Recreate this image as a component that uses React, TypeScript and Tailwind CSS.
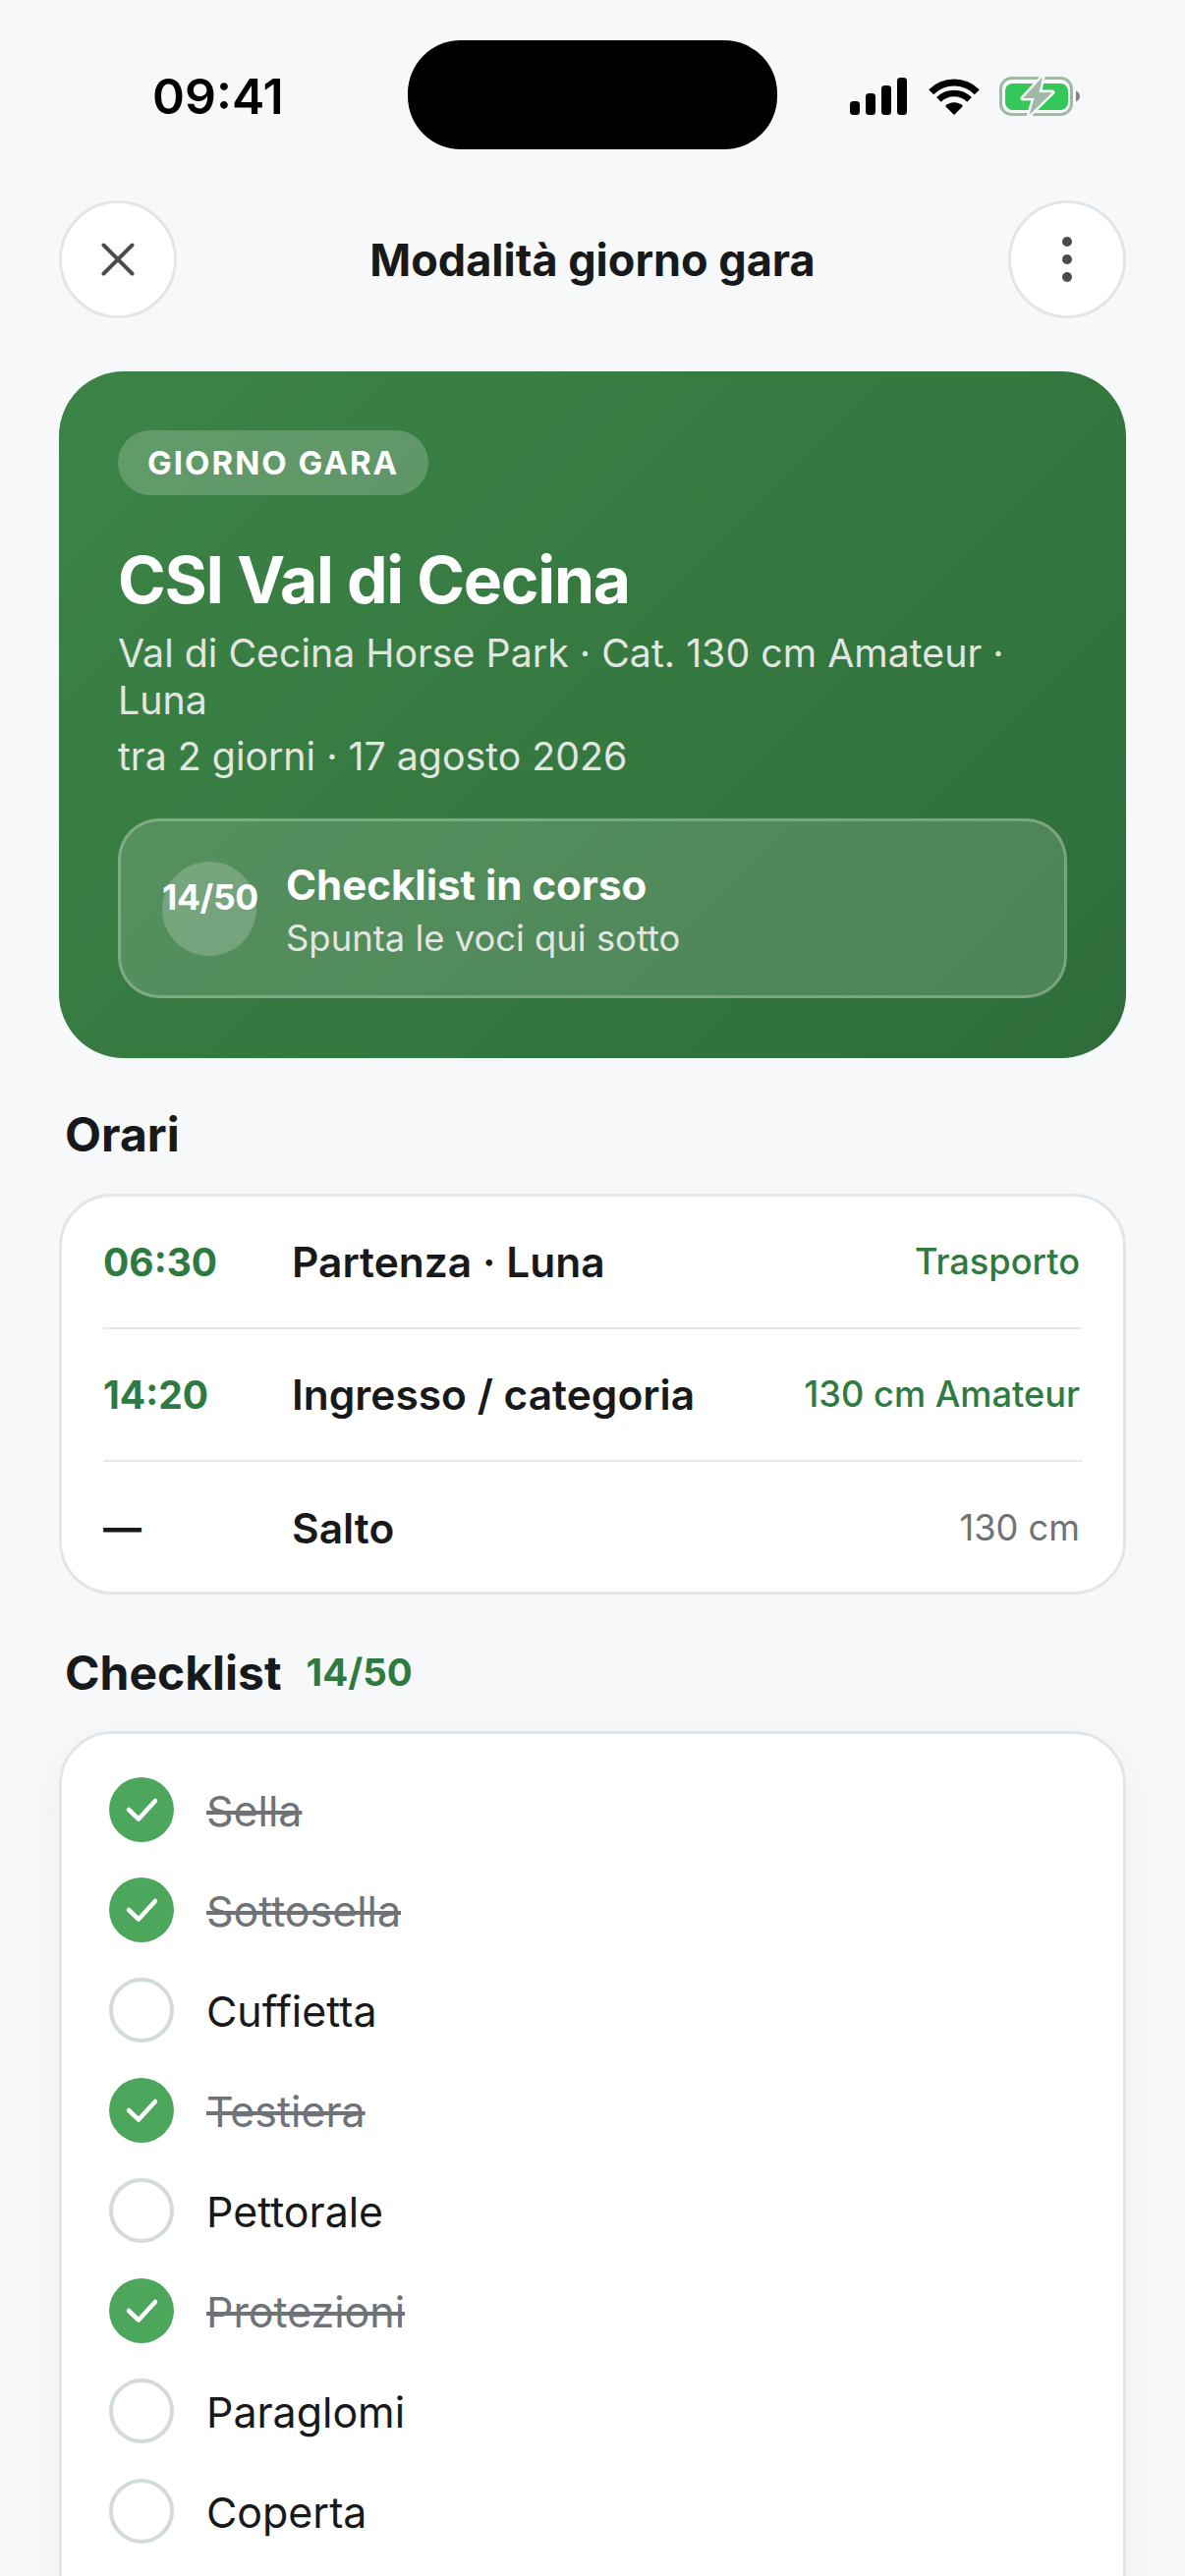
import React from "react";

const Signal = () => (
  <svg width="58" height="38" viewBox="0 0 58 38" fill="#000">
    <rect x="0" y="24" width="10" height="14" rx="3.5" />
    <rect x="16" y="16" width="10" height="22" rx="3.5" />
    <rect x="32" y="8" width="10" height="30" rx="3.5" />
    <rect x="48" y="0" width="10" height="38" rx="3.5" />
  </svg>
);

const Wifi = () => (
  <svg width="52" height="38" viewBox="0 0 52 38" fill="none" stroke="#000">
    <path d="M2.7 14.7A33 33 0 0 1 49.3 14.7" strokeWidth="7" />
    <path d="M10.4 22.4A22 22 0 0 1 41.6 22.4" strokeWidth="6.5" />
    <path d="M17 29L26 38L35 29A12.7 12.7 0 0 0 17 29Z" fill="#000" stroke="none" />
  </svg>
);

const Battery = () => (
  <svg width="82" height="40" viewBox="0 0 82 40" fill="none">
    <rect x="1.5" y="1.5" width="72" height="37" rx="11" stroke="#9fb9a3" strokeWidth="3" />
    <rect x="6" y="7" width="64" height="27" rx="7.5" fill="#34c759" />
    <path d="M78 14.5C80.5 15.5 82 17.5 82 20C82 22.5 80.5 24.5 78 25.5Z" fill="#7d8288" />
    <path d="M44 0.5L24 22H35.5L30.5 39L54 16H40.5Z" fill="#a0b9a4" stroke="#f6f8fa" strokeWidth="5" paintOrder="stroke" strokeLinejoin="round" />
  </svg>
);

const Check = ({ done, label }: { done: boolean; label: string }) => (
  <div className="flex items-center gap-[33px] h-[66px] mb-[36px]">
    {done ? (
      <div className="w-[66px] h-[66px] rounded-full bg-[#4ca65b] shrink-0">
        <svg width="66" height="66" viewBox="0 0 66 66" fill="none" stroke="#fff" strokeWidth="4.5" strokeLinecap="round" strokeLinejoin="round">
          <path d="M20 33L30 42.5L47 24" />
        </svg>
      </div>
    ) : (
      <div className="w-[66px] h-[66px] rounded-full border-[4.5px] border-[#d3dbd9] bg-white shrink-0" />
    )}
    <span className={done ? "pt-[2px] text-[42.9px] text-[#6f7378] line-through" : "pt-[2px] text-[42.9px] text-[#18191b]"}>{label}</span>
  </div>
);

const Row = ({ time, name, right, tone, border }: { time: string; name: string; right: string; tone: string; border: boolean }) => (
  <div className={border ? "flex items-center h-[135px] border-b-[2px] border-[#e6e9eb]" : "flex items-center h-[135px]"}>
    <span className={time === "—" ? "w-[192px] text-[39px] font-bold text-[#18191b]" : "w-[192px] pt-[2px] text-[39px] font-bold text-[#2f7a41]"}>{time}</span>
    <span className="flex-1 text-[42.5px] font-semibold text-[#18191b]">{name}</span>
    <span className={tone}>{right}</span>
  </div>
);

export default function App() {
  return (
    <div className="w-[1206px] h-[2622px] overflow-hidden bg-[#f6f8fa] font-['Inter',sans-serif] text-[#18191b]">
      <div className="flex items-center h-[111px] relative top-[41px]">
        <span className="ml-[155px] w-[260px] text-[50px] font-semibold text-black leading-none pt-[3px]">09:41</span>
        <div className="w-[376px] h-[111px] rounded-[54px] bg-black" />
        <div className="ml-[74px] mt-[3px] flex items-center">
          <Signal />
          <div className="ml-[22px]"><Wifi /></div>
          <div className="ml-[20px]"><Battery /></div>
        </div>
      </div>

      <div className="flex items-center justify-between px-[60px] mt-[93px]">
        <button className="w-[120px] h-[120px] rounded-full bg-white border-[3px] border-[#e3e6e8] flex items-center justify-center">
          <svg width="34" height="34" viewBox="0 0 34 34" fill="none" stroke="#4a4d50" strokeWidth="4" strokeLinecap="round">
            <path d="M2.5 2.5L31.5 31.5M31.5 2.5L2.5 31.5" />
          </svg>
        </button>
        <span className="text-[45px] font-bold text-[#18191b] pt-[2px]">Modalità giorno gara</span>
        <button className="w-[120px] h-[120px] rounded-full bg-white border-[3px] border-[#e3e6e8] flex items-center justify-center">
          <svg width="12" height="48" viewBox="0 0 12 48" fill="#4a4d50">
            <circle cx="6" cy="6" r="5" />
            <circle cx="6" cy="24" r="5" />
            <circle cx="6" cy="42" r="5" />
          </svg>
        </button>
      </div>

      <div className="mx-[60px] mt-[54px] h-[699px] rounded-[66px] p-[60px] bg-[linear-gradient(135deg,#3c8446,#2e6d3a)] text-white">
        <div className="inline-flex items-center h-[66px] px-[30px] pt-[2px] rounded-full bg-white/20 text-[33px] font-bold tracking-[2px]">GIORNO GARA</div>
        <h1 className="mt-[44px] text-[66px] leading-[84px] font-bold tracking-[-1.3px]">CSI Val di Cecina</h1>
        <p className="mt-[8.5px] text-[39.3px] leading-[48px] text-[#e1e6e1]">Val di Cecina Horse Park · Cat. 130 cm Amateur · Luna</p>
        <p className="mt-[9px] text-[39.3px] leading-[48px] text-[#e1e6e1]">tra 2 giorni · 17 agosto 2026</p>
        <div className="mt-[39.5px] h-[183px] rounded-[42px] bg-white/15 border-[3px] border-white/25 flex items-center pl-[42px] gap-[30px]">
          <div className="w-[96px] h-[96px] rounded-full bg-white/20 shrink-0 text-[35.5px] leading-[74px] font-bold whitespace-nowrap tracking-[-0.4px]">14/50</div>
          <div className="pt-[3px]">
            <div className="text-[42px] leading-[52px] font-bold">Checklist in corso</div>
            <div className="mt-[5px] text-[36.4px] leading-[46px] text-[#e1e6e1]">Spunta le voci qui sotto</div>
          </div>
        </div>
      </div>

      <h2 className="mt-[48px] ml-[66px] text-[48px] leading-[60px] font-bold">Orari</h2>
      <div className="mx-[60px] mt-[30px] h-[408px] rounded-[54px] bg-white border-[3px] border-[#e3e6e8] px-[42px]">
        <Row time="06:30" name="Partenza · Luna" right="Trasporto" tone="mr-[2px] text-[36.2px] font-medium text-[#2f7a41]" border />
        <Row time="14:20" name="Ingresso / categoria" right="130 cm Amateur" tone="mr-[2px] text-[36.2px] font-medium text-[#2f7a41]" border />
        <Row time="—" name="Salto" right="130 cm" tone="mr-[2px] text-[36.2px] text-[#6f7378]" border={false} />
      </div>

      <div className="mt-[50px] ml-[66px] flex items-center gap-[25px] h-[60px]">
        <h2 className="text-[48px] font-bold">Checklist</h2>
        <span className="text-[38.5px] font-bold text-[#2f7a41]">14/50</span>
      </div>
      <div className="mx-[60px] mt-[29px] rounded-[54px] bg-white border-[3px] border-[#e3e6e8] pt-[44px] pl-[48px] pb-[200px] shadow-[0_12px_48px_rgba(0,0,0,0.04)]">
        <Check done label="Sella" />
        <Check done label="Sottosella" />
        <Check done={false} label="Cuffietta" />
        <Check done label="Testiera" />
        <Check done={false} label="Pettorale" />
        <Check done label="Protezioni" />
        <Check done={false} label="Paraglomi" />
        <Check done={false} label="Coperta" />
      </div>
    </div>
  );
}
